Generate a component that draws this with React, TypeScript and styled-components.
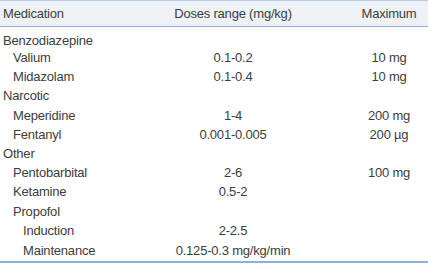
import styled, { createGlobalStyle } from 'styled-components'

const GlobalStyle = createGlobalStyle`
	html, body {
		margin: 0;
		padding: 0;
		background: #ffffff;
	}
	body {
		font-family: 'Liberation Sans', Arial, sans-serif;
	}
`

type Row = {
	name: string
	level: number
	dose?: string
	max?: string
}

const rows: Row[] = [
	{ name: 'Benzodiazepine', level: 0 },
	{ name: 'Valium', level: 1, dose: '0.1-0.2', max: '10 mg' },
	{ name: 'Midazolam', level: 1, dose: '0.1-0.4', max: '10 mg' },
	{ name: 'Narcotic', level: 0 },
	{ name: 'Meperidine', level: 1, dose: '1-4', max: '200 mg' },
	{ name: 'Fentanyl', level: 1, dose: '0.001-0.005', max: '200 µg' },
	{ name: 'Other', level: 0 },
	{ name: 'Pentobarbital', level: 1, dose: '2-6', max: '100 mg' },
	{ name: 'Ketamine', level: 1, dose: '0.5-2' },
	{ name: 'Propofol', level: 1 },
	{ name: 'Induction', level: 2, dose: '2-2.5' },
	{ name: 'Maintenance', level: 2, dose: '0.125-0.3 mg/kg/min' },
]

export default function App() {
	return (
		<>
			<GlobalStyle />
			<Table>
				<thead>
					<HeadRow>
						<NameHead>Medication</NameHead>
						<DoseHead>Doses range (mg/kg)</DoseHead>
						<MaxHead>Maximum</MaxHead>
					</HeadRow>
				</thead>
				<tbody>
					{rows.map((r, i) => (
						<BodyRow key={r.name} $first={i === 0} $last={i === rows.length - 1}>
							<NameCell $level={r.level}>{r.name}</NameCell>
							<DoseCell>{r.dose}</DoseCell>
							<MaxCell>{r.max}</MaxCell>
						</BodyRow>
					))}
				</tbody>
			</Table>
		</>
	)
}

const Table = styled.table`
	width: 428px;
	table-layout: fixed;
	border-collapse: collapse;
	border-top: 1px solid #b9cde3;
	border-bottom: 2px solid #8fb1d6;
	color: #3d3d3d;
	font-size: 13px;
	letter-spacing: -0.2px;
`
const HeadRow = styled.tr`
	background-color: #eef1f5;
	border-bottom: 1px solid #8fb1d6;
	height: 26px;
`
const NameHead = styled.th`
	font-weight: normal;
	text-align: left;
	width: 116px;
	padding: 0 0 0 3px;
`
const DoseHead = styled.th`
	font-weight: normal;
	text-align: center;
	width: 228px;
	padding: 0;
`
const MaxHead = styled.th`
	font-weight: normal;
	text-align: center;
	width: 84px;
	padding: 0;
`
const BodyRow = styled.tr<{ $first?: boolean; $last?: boolean }>`
	height: ${(p) => (p.$first ? '22px' : p.$last ? '22px' : '19.2px')};
	vertical-align: ${(p) => (p.$first ? 'bottom' : 'middle')};
`
const NameCell = styled.td<{ $level: number }>`
	padding: 0 0 0 ${(p) => 3 + p.$level * 10}px;
	line-height: 16px;
	white-space: nowrap;
`
const DoseCell = styled.td`
	text-align: center;
	padding: 0;
	line-height: 16px;
	white-space: nowrap;
`
const MaxCell = styled.td`
	text-align: center;
	padding: 0;
	line-height: 16px;
`
